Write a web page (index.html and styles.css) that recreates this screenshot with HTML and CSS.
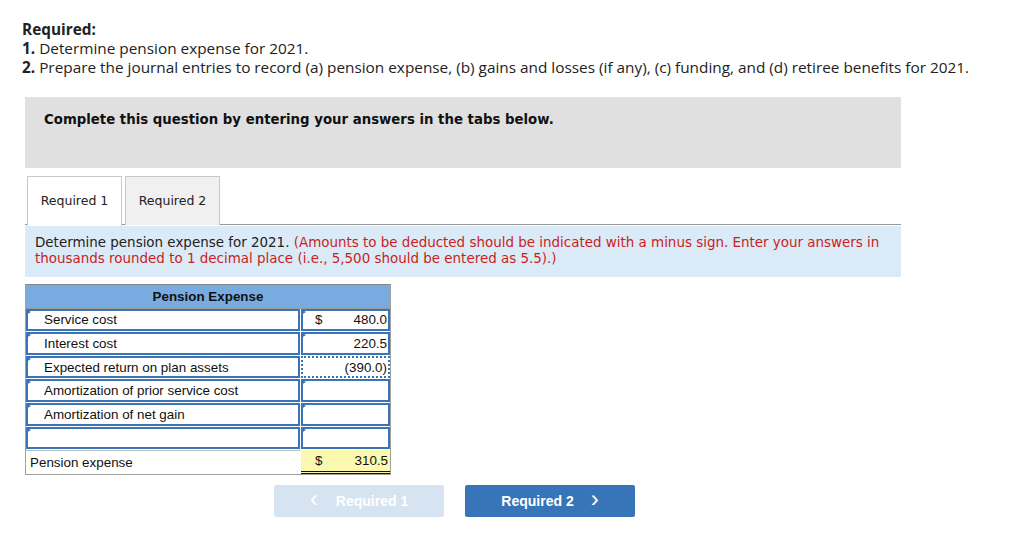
FILE: index.html
```html
<!DOCTYPE html>
<html>
<head>
<meta charset="utf-8">
<link rel="stylesheet" href="styles.css">
</head>
<body>
<div class="page">
  <div class="req">
    <p class="req-title">Required:</p>
    <p><b>1.</b> Determine pension expense for 2021.</p>
    <p><b>2.</b> Prepare the journal entries to record (a) pension expense, (b) gains and losses (if any), (c) funding, and (d) retiree benefits for 2021.</p>
  </div>

  <div class="panel">
    <div class="instr">Complete this question by entering your answers in the tabs below.</div>

    <div class="tabs">
      <div class="tab active">Required 1</div>
      <div class="tab">Required 2</div>
    </div>

    <div class="info">Determine pension expense for 2021. <span class="red">(Amounts to be deducted should be indicated with a minus sign. Enter your answers in</span><br><span class="red">thousands rounded to 1 decimal place (i.e., 5,500 should be entered as 5.5).)</span></div>

    <div class="sheet">
      <div class="sheet-head">Pension Expense</div>

      <div class="cell inp lbl"><span class="flag"></span>Service cost</div>
      <div class="cell inp num"><span class="flag"></span><span class="cur">$</span><span>480.0</span></div>

      <div class="cell inp lbl"><span class="flag"></span>Interest cost</div>
      <div class="cell inp num"><span class="flag"></span><span class="cur"></span><span>220.5</span></div>

      <div class="cell inp lbl"><span class="flag"></span>Expected return on plan assets</div>
      <div class="cell inp num focus"><span class="cur"></span><span>(390.0)</span></div>

      <div class="cell inp lbl"><span class="flag"></span>Amortization of prior service cost</div>
      <div class="cell inp num"><span class="flag"></span></div>

      <div class="cell inp lbl"><span class="flag"></span>Amortization of net gain</div>
      <div class="cell inp num"><span class="flag"></span></div>

      <div class="cell inp lbl"><span class="flag"></span></div>
      <div class="cell inp num"><span class="flag"></span></div>

      <div class="cell total-lbl">Pension expense</div>
      <div class="cell total num"><span class="cur">$</span><span>310.5</span></div>
    </div>

    <div class="nav">
      <button class="btn prev"><span class="chev">&lsaquo;</span>Required 1</button>
      <button class="btn next">Required 2<span class="chev">&rsaquo;</span></button>
    </div>
  </div>
</div>
</body>
</html>
```

FILE: styles.css
```css
* { box-sizing: border-box; }
html, body { margin: 0; padding: 0; background: #fff; }

.page { padding: 20px 0 0 22px; }

.req {
  font-family: "Open Sans", Lato, sans-serif;
  font-size: 15.35px;
  line-height: 19px;
  color: #222;
}
.req p { margin: 0; }
.req-title { font-weight: bold; }

.panel { margin-left: 3px; width: 876px; }

.instr {
  margin-top: 20px;
  background: #e0e0e0;
  height: 71px;
  padding: 15px 0 0 19px;
  font-family: "DejaVu Sans", Verdana, sans-serif;
  font-weight: bold;
  font-size: 13.3px;
  color: #111;
}

.tabs {
  margin-top: 8px;
  display: flex;
  gap: 3px;
  padding-left: 2px;
  border-bottom: 1px solid #999;
  height: 49px;
}
.tab {
  width: 95px;
  height: 49px;
  border: 1px solid #c8c8c8;
  border-bottom: none;
  background: #f0f0f0;
  font-family: "DejaVu Sans", Verdana, sans-serif;
  font-size: 12.5px;
  color: #222;
  display: flex;
  align-items: center;
  justify-content: center;
  padding-bottom: 2px;
}
.tab.active { background: #fff; height: 50px; }

.info {
  margin-top: 1px;
  background: #dbeaf7;
  height: 51px;
  padding: 9px 10px 0 10px;
  font-family: "DejaVu Sans", Verdana, sans-serif;
  font-size: 13.45px;
  line-height: 16px;
  color: #222;
  white-space: nowrap;
}
.red { color: #c81e1e; }

.sheet {
  margin-top: 7px;
  width: 366px;
  border: 1px solid #a0a0a0;
  border-top: 1px solid #888;
  display: grid;
  grid-template-columns: 274px 90px;
  grid-auto-rows: 23.6px;
  font-family: "Liberation Sans", Arial, sans-serif;
  font-size: 13.4px;
  color: #111;
}
.sheet-head {
  grid-column: 1 / 3;
  height: 23.6px;
  background: #78ace0;
  text-align: center;
  font-weight: bold;
  line-height: 23px;
  border-bottom: 1px solid #999;
}
.cell {
  position: relative;
  display: flex;
  align-items: center;
}
.inp {
  border: 2px solid #3b74b6;
  background: #fff;
  margin-bottom: 1px;
}
.lbl { padding-left: 16px; }
.num {
  margin-left: 1px;
  padding: 0 1px 0 12px;
  justify-content: space-between;
}
.focus {
  border: 2px dotted #3b74b6;
}
.flag {
  position: absolute;
  left: -2px;
  top: -2px;
  width: 0; height: 0;
  border-top: 3.5px solid transparent;
  border-bottom: 3.5px solid transparent;
  border-left: 5px solid #3b74b6;
}
.total-lbl {
  padding-left: 4px;
  border-top: 1px solid #bbb;
}
.total {
  margin-left: 1px;
  background: #fbf8b0;
  border-bottom: 3px double #111;
  padding: 0 2px 0 14px;
}

.nav {
  margin-top: 10px;
  margin-left: 249px;
  display: flex;
  gap: 21px;
}
.btn {
  width: 170px;
  height: 32px;
  border: none;
  border-radius: 2px;
  font-family: "Liberation Sans", Arial, sans-serif;
  font-weight: bold;
  font-size: 14px;
  color: #fff;
  display: flex;
  align-items: center;
  justify-content: center;
  padding: 0;
}
.prev { background: #d6e4f1; }
.next { background: #3875b8; }
.chev { font-size: 24px; font-weight: normal; line-height: 1; position: relative; top: -2px; }
.prev .chev { margin-right: 18px; }
.next .chev { margin-left: 17px; }
```
